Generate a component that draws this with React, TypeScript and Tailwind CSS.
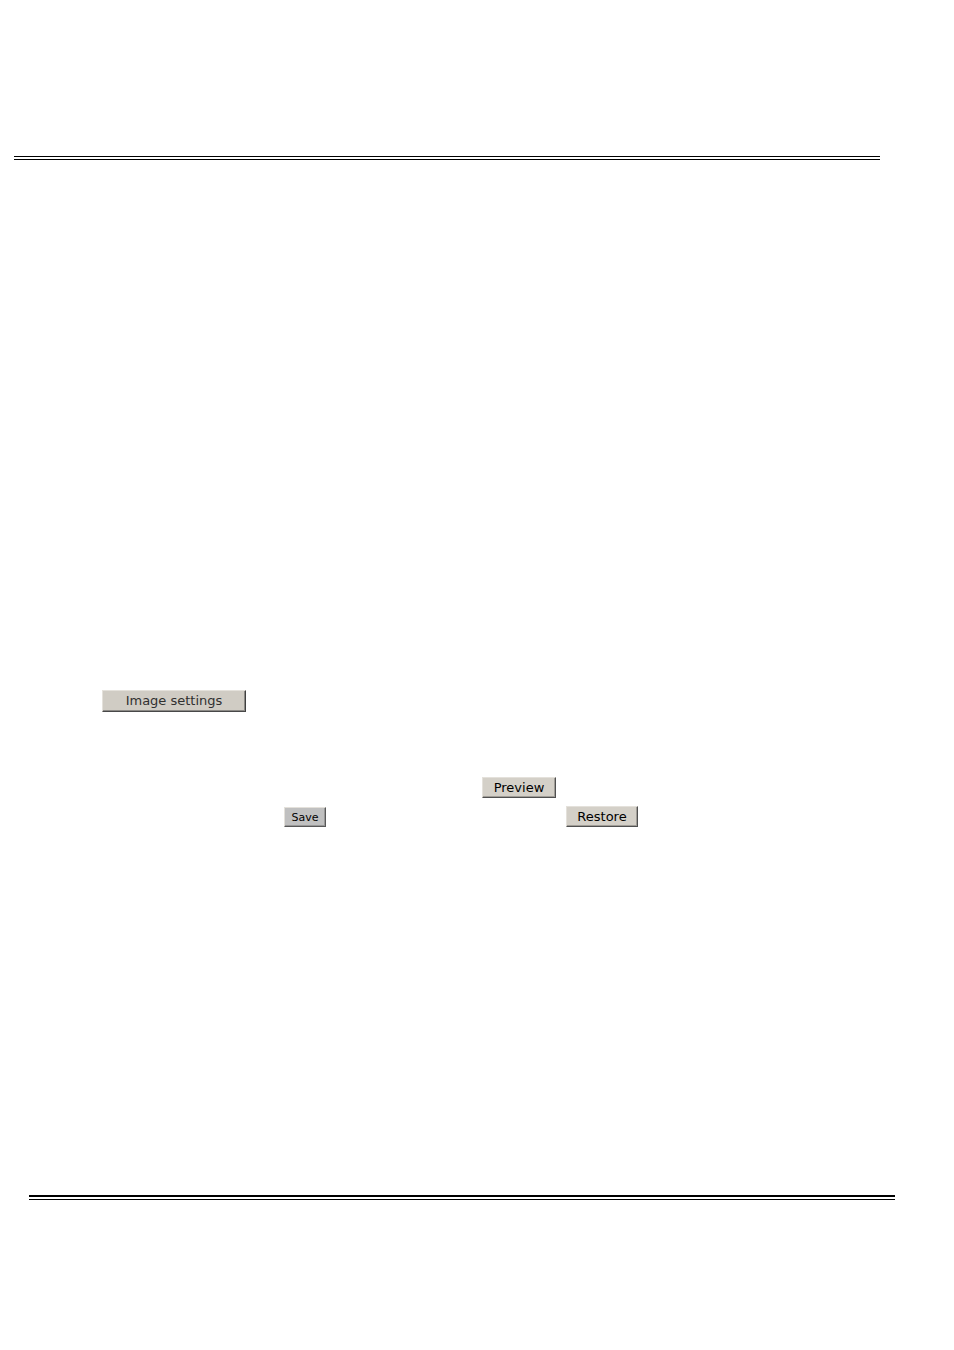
import type { ReactNode } from "react";

type DialogButtonProps = {
  children: ReactNode;
  className: string;
};

function DialogButton({ children, className }: DialogButtonProps) {
  return (
    <button
      type="button"
      className={`flex shrink-0 items-center justify-center border border-t-[#e4e1db] border-l-[#e4e1db] whitespace-nowrap ${className}`}
    >
      {children}
    </button>
  );
}

export default function App() {
  return (
    <div className="flex min-h-screen flex-col bg-white font-['DejaVu_Sans',Verdana,sans-serif] text-black">
      <header className="pt-[156px] pr-[74px] pl-[14px]">
        <div className="h-1 border-y border-black" />
      </header>

      <main className="flex flex-col pt-[530px]">
        <div className="flex pl-[102px]">
          <DialogButton className="h-[22px] w-36 border-r-[#404040] border-b-[#484848] bg-[#d0ccc4] text-[13px] leading-4 text-[#303030] shadow-[inset_-1px_-1px_0_#8c8a86]">
            Image settings
          </DialogButton>
        </div>
        <div className="flex pt-[65px] pl-[482px]">
          <DialogButton className="h-[21px] w-[74px] border-r-[#505050] border-b-[#505050] bg-[#d4d0c8] pt-px text-[13px] leading-4 shadow-[inset_-1px_-1px_0_#a09d97]">
            Preview
          </DialogButton>
        </div>
        <div className="flex items-end pt-2 pl-[284px]">
          <DialogButton className="h-5 w-[42px] border-r-[#585858] border-b-[#585858] bg-[#c0c0c0] pt-px text-[11px] leading-4 shadow-[inset_-1px_-1px_0_#989898]">
            Save
          </DialogButton>
          <div className="flex pl-60">
            <DialogButton className="h-[21px] w-[72px] border-r-[#505050] border-b-[#505050] bg-[#d4d0c8] pt-px text-[13px] leading-4 shadow-[inset_-1px_-1px_0_#a09d97]">
              Restore
            </DialogButton>
          </div>
        </div>
      </main>

      <footer className="mt-auto pr-[59px] pb-[150px] pl-[29px]">
        <div className="h-[5px] border-t-2 border-b border-black" />
      </footer>
    </div>
  );
}
